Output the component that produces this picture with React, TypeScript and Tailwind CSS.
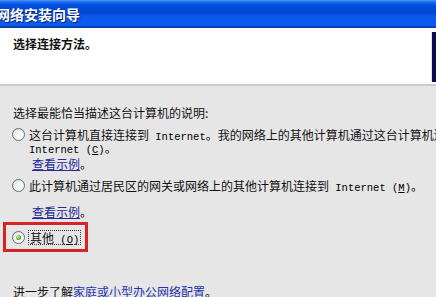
import React from "react";

const Mono = ({ children }: { children: React.ReactNode }) => (
  <span className="align-baseline font-['Liberation_Mono',monospace] text-[10.5px] leading-[13px] text-[#000]">{children}</span>
);

const Radio = ({ checked = false }: { checked?: boolean }) => (
  <span className="relative inline-flex h-[13px] w-[13px] shrink-0 items-center justify-center rounded-full border border-[#5a6f86] bg-[radial-gradient(circle_at_65%_65%,#ffffff_0%,#f4f4f0_45%,#d6d6cc_100%)]">
    {checked && (
      <span className="h-[5px] w-[5px] rounded-full bg-[radial-gradient(circle_at_35%_35%,#c8f2b0_0%,#4fb02a_60%,#21801a_100%)]" />
    )}
  </span>
);

const Line = ({ className = "", children }: { className?: string; children: React.ReactNode }) => (
  <div className={`h-[13px] overflow-visible whitespace-nowrap leading-[13px] ${className}`}>{children}</div>
);

export default function App() {
  return (
    <div className="h-[297px] w-[436px] overflow-hidden bg-[#e6e6e6] font-['Noto_Sans_CJK_SC',sans-serif] text-[12px] leading-[13px] text-[#111]">
      {/* Title bar */}
      <div className="flex h-[28px] items-center overflow-hidden bg-[linear-gradient(to_bottom,#4a9af7_0px,#1d6cf0_2px,#0050dc_5px,#0046d2_13px,#0a58ea_16px,#0a5cee_25px,#0040bc_27px,#0038a8_28px)]">
        <span className="-ml-[4px] whitespace-nowrap text-[14px] font-bold leading-[16px] text-white [text-shadow:1px_1px_0_#0a1e6a]">
          网络安装向导
        </span>
      </div>

      {/* Header */}
      <div className="flex h-[58px] overflow-hidden border-b-2 border-[#cdcdcd] bg-white">
        <div className="h-[13px] pl-[13px] pt-[9px] text-[12px] font-bold leading-[13px] text-[#111]">
          选择连接方法。
        </div>
        <div className="ml-auto mt-[4px] h-[50px] w-[5px] shrink-0 border-l border-[#dfe4ef] bg-[#0b0b4e]" />
      </div>

      {/* Body */}
      <div className="flex flex-col">
        <Line className="ml-[13px] mt-[20px]">选择最能恰当描述这台计算机的说明:</Line>

        <div className="ml-[12px] mt-[9px] flex items-start gap-[4px]">
          <Radio />
          <div>
            <Line>
              这台计算机直接连接到<Mono>&nbsp;Internet</Mono>。我的网络上的其他计算机通过这台计算机连接到
            </Line>
            <Line>
              <Mono>
                Internet (<u>C</u>)
              </Mono>
              。
            </Line>
          </div>
        </div>

        <Line className="ml-[32px] mt-[3px]">
          <span className="text-[#22279a] underline decoration-[#22279a]">查看示例</span>。
        </Line>

        <div className="ml-[12px] mt-[9px] flex items-start gap-[4px]">
          <Radio />
          <Line>
            此计算机通过居民区的网关或网络上的其他计算机连接到
            <Mono>
              &nbsp;Internet (<u>M</u>)
            </Mono>
            。
          </Line>
        </div>

        <Line className="ml-[32px] mt-[13px]">
          <span className="text-[#22279a] underline decoration-[#22279a]">查看示例</span>。
        </Line>

        <div className="ml-[3px] mt-[4px] flex h-[30px] w-[85px] items-center border-[3px] border-[#d42424] pl-[6px]">
          <div className="flex items-center gap-[3px]">
            <Radio checked />
            <span className="h-[15px] whitespace-nowrap border border-dotted border-[#333] px-[1px] leading-[13px]">
              其他<Mono>&nbsp;(<u>O</u>)</Mono>
            </span>
          </div>
        </div>

        <Line className="ml-[13px] mt-[33px]">
          进一步了解<span className="text-[#2434a8] underline decoration-[#2434a8]">家庭或小型办公网络配置</span>。
        </Line>
      </div>
    </div>
  );
}
